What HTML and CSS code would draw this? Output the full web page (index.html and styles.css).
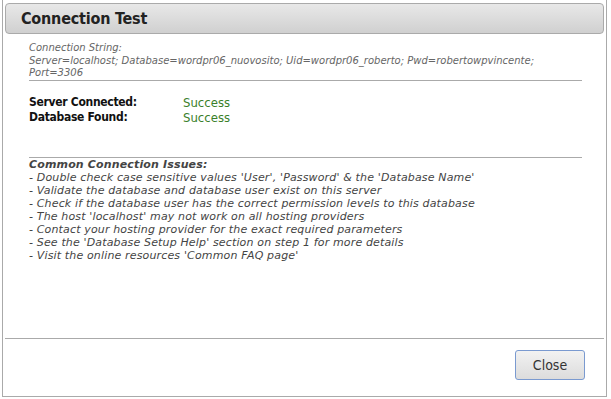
FILE: index.html
```html
<!DOCTYPE html>
<html lang="en">
<head>
    <meta charset="UTF-8">
    <title>Connection Test</title>
    <link rel="stylesheet" href="styles.css">
</head>
<body>
    <div class="dialog">
        <div class="dialog-title">Connection Test</div>
        <div class="dialog-body">
            <div class="conn-string">
                Connection String:<br>
                Server=localhost; Database=wordpr06_nuovosito; Uid=wordpr06_roberto; Pwd=robertowpvincente;<br>
                Port=3306
            </div>
            <table class="results">
                <tr>
                    <td class="label">Server Connected:</td>
                    <td class="ok">Success</td>
                </tr>
                <tr>
                    <td class="label">Database Found:</td>
                    <td class="ok">Success</td>
                </tr>
            </table>
            <div class="issues">
                <b>Common Connection Issues:</b><br>
                - Double check case sensitive values 'User', 'Password' &amp; the 'Database Name'<br>
                - Validate the database and database user exist on this server<br>
                - Check if the database user has the correct permission levels to this database<br>
                - The host 'localhost' may not work on all hosting providers<br>
                - Contact your hosting provider for the exact required parameters<br>
                - See the 'Database Setup Help' section on step 1 for more details<br>
                - Visit the online resources 'Common FAQ page'
            </div>
        </div>
        <div class="dialog-buttons">
            <button class="btn">Close</button>
        </div>
    </div>
</body>
</html>
```

FILE: styles.css
```css
body {
    margin: 0;
    background: #fff;
    font-family: "DejaVu Sans", sans-serif;
}

.dialog {
    margin: 0 4px 0 2px;
    height: 397px;
    border: 1px solid #aaa;
    border-top: none;
    background: #fff;
    display: flex;
    flex-direction: column;
    box-sizing: border-box;
}

.dialog-title {
    margin: 3px 2px 0 2px;
    height: 31px;
    box-sizing: border-box;
    padding: 0 0 0 15px;
    line-height: 30px;
    font-family: "DejaVu Sans Condensed", "DejaVu Sans", sans-serif;
    font-size: 16px;
    letter-spacing: -0.2px;
    font-weight: bold;
    color: #222;
    border: 1px solid #aaa;
    border-radius: 4px;
    background: linear-gradient(#e8e8e8, #d0d0d0);
}

.dialog-body {
    flex: 1;
    padding: 8px 24px 0 26px;
}

.conn-string {
    font-size: 10px;
    font-style: italic;
    line-height: 12.5px;
    color: #666;
    border-bottom: 1px solid #aaa;
}

.results {
    border-collapse: collapse;
    margin-top: 14px;
    font-family: "DejaVu Sans Condensed", "DejaVu Sans", sans-serif;
    font-size: 13px;
}

.results td {
    padding: 0;
    line-height: 15px;
}

.results .label {
    font-size: 12px;
    letter-spacing: -0.3px;
    font-weight: bold;
    color: #111;
    width: 154px;
}

.results .ok {
    color: #3a7f2a;
}

.issues {
    margin-top: 32px;
    border-top: 1px solid #aaa;
    font-size: 11px;
    letter-spacing: 0.15px;
    font-style: italic;
    line-height: 13px;
    color: #444;
}

.issues b {
    color: #444;
}

.dialog-buttons {
    margin: 0 2px;
    border-top: 1px solid #aaa;
    height: 58px;
    display: flex;
    justify-content: flex-end;
    align-items: flex-start;
    padding: 11px 19px 0 0;
    box-sizing: border-box;
}

.btn {
    width: 70px;
    height: 30px;
    font-family: "DejaVu Sans Condensed", "DejaVu Sans", sans-serif;
    font-size: 14px;
    color: #333;
    border: 1px solid #7a9ad0;
    border-radius: 3px;
    background: linear-gradient(#f2f2f2, #dcdcdc);
}
```
